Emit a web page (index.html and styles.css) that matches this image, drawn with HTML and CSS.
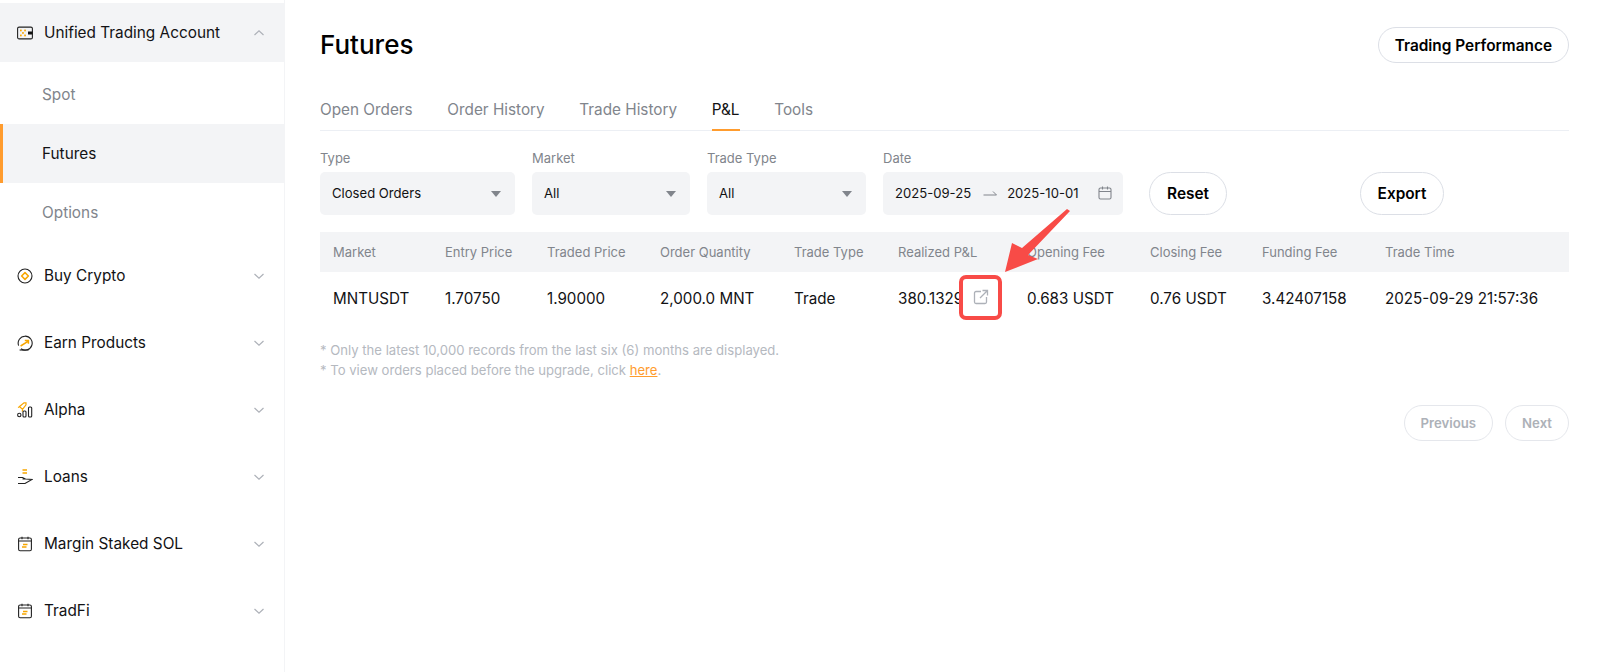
FILE: index.html
```html
<!DOCTYPE html>
<html lang="en">
<head>
<meta charset="utf-8">
<title>Futures</title>
<link rel="stylesheet" href="styles.css">
</head>
<body>
<div class="page">
  <aside class="sidebar">
    <div class="nav-head open">
      <svg class="nav-icon" viewBox="0 0 16 16"><rect x="0.6" y="2.1" width="14.8" height="11.8" rx="1.5" class="ik"/><rect x="11" y="6.5" width="4.5" height="3" fill="#111"/><g fill="#f7a600"><rect x="3" y="4.6" width="1.7" height="1.7"/><rect x="7.2" y="4.6" width="1.7" height="1.7"/><rect x="5.1" y="7.1" width="1.7" height="1.7"/><rect x="3" y="9.6" width="1.7" height="1.7"/><rect x="7.2" y="9.6" width="1.7" height="1.7"/></g></svg>
      <span class="nav-label">Unified Trading Account</span>
      <svg class="chev" viewBox="0 0 12 12"><path d="M1.5 8 6 3.8 10.5 8"/></svg>
    </div>
    <div class="nav-sub">Spot</div>
    <div class="nav-sub active">Futures</div>
    <div class="nav-sub">Options</div>
    <div class="nav-head group">
      <svg class="nav-icon" viewBox="0 0 16 16"><circle cx="8" cy="8" r="7" class="ik"/><path d="M8 4.6 11.4 8 8 11.4 4.6 8Z" fill="none" stroke="#f7a600" stroke-width="1.5" stroke-linejoin="round"/></svg>
      <span class="nav-label">Buy Crypto</span>
      <svg class="chev" viewBox="0 0 12 12"><path d="M1.5 4 6 8.2 10.5 4"/></svg>
    </div>
    <div class="nav-head">
      <svg class="nav-icon" viewBox="0 0 16 16"><path d="M1.6 10.6A7 7 0 1 1 4 13.8" class="ik"/><path d="M2.6 15h9" class="ik"/><path d="M3.6 11 11 6.4M7.8 5.6h3.6v3.2" fill="none" stroke="#f7a600" stroke-width="1.5"/></svg>
      <span class="nav-label">Earn Products</span>
      <svg class="chev" viewBox="0 0 12 12"><path d="M1.5 4 6 8.2 10.5 4"/></svg>
    </div>
    <div class="nav-head">
      <svg class="nav-icon" viewBox="0 0 16 16"><path d="M2.5 4.5 7 .9h2v2L5.5 7.4ZM1 5.5l2-1M5.8 8l-.8 1.6" fill="none" stroke="#f7a600" stroke-width="1.2"/><circle cx="2.3" cy="13" r="1.7" class="ik"/><rect x="6" y="9" width="3" height="6" rx="1" class="ik"/><rect x="11.5" y="5" width="3.2" height="10" rx="1" class="ik"/></svg>
      <span class="nav-label">Alpha</span>
      <svg class="chev" viewBox="0 0 12 12"><path d="M1.5 4 6 8.2 10.5 4"/></svg>
    </div>
    <div class="nav-head">
      <svg class="nav-icon" viewBox="0 0 16 16"><path d="M5.5 1h4.5M5.5 4h4.5" fill="none" stroke="#f7a600" stroke-width="1.3"/><path d="M1 8.5h4.5l3 1.5h-3M8.5 10 15 10.5 8 14.5H1" class="ik"/></svg>
      <span class="nav-label">Loans</span>
      <svg class="chev" viewBox="0 0 12 12"><path d="M1.5 4 6 8.2 10.5 4"/></svg>
    </div>
    <div class="nav-head">
      <svg class="nav-icon" viewBox="0 0 16 16"><rect x="1.6" y="2" width="12.8" height="12.8" rx="1.5" class="ik"/><path d="M1.6 5h12.8M5 .8v2.4M11 .8v2.4" class="ik"/><path d="M6 8.5h4.5M5 11h4.5" fill="none" stroke="#f7a600" stroke-width="1.3"/></svg>
      <span class="nav-label">Margin Staked SOL</span>
      <svg class="chev" viewBox="0 0 12 12"><path d="M1.5 4 6 8.2 10.5 4"/></svg>
    </div>
    <div class="nav-head">
      <svg class="nav-icon" viewBox="0 0 16 16"><rect x="1.6" y="2" width="12.8" height="12.8" rx="1.5" class="ik"/><path d="M1.6 5h12.8M5 .8v2.4M11 .8v2.4" class="ik"/><path d="M6 8.5h4.5M5 11h4.5" fill="none" stroke="#f7a600" stroke-width="1.3"/></svg>
      <span class="nav-label">TradFi</span>
      <svg class="chev" viewBox="0 0 12 12"><path d="M1.5 4 6 8.2 10.5 4"/></svg>
    </div>
  </aside>

  <main class="main">
    <header class="title-row">
      <h1 class="title">Futures</h1>
      <button class="btn">Trading Performance</button>
    </header>

    <nav class="tabs">
      <span class="tab">Open Orders</span>
      <span class="tab">Order History</span>
      <span class="tab">Trade History</span>
      <span class="tab current">P&amp;L</span>
      <span class="tab">Tools</span>
    </nav>

    <section class="filters">
      <div class="field f-type">
        <label class="field-label">Type</label>
        <div class="select"><span>Closed Orders</span><i class="caret"></i></div>
      </div>
      <div class="field f-market">
        <label class="field-label">Market</label>
        <div class="select"><span>All</span><i class="caret"></i></div>
      </div>
      <div class="field f-trade">
        <label class="field-label">Trade Type</label>
        <div class="select"><span>All</span><i class="caret"></i></div>
      </div>
      <div class="field f-date">
        <label class="field-label">Date</label>
        <div class="select date">
          <span>2025-09-25</span>
          <svg class="range" viewBox="0 0 14 6"><path d="M0.5 5h13L10 1.5"/></svg>
          <span>2025-10-01</span>
          <svg class="cal" viewBox="0 0 14 14"><rect x="1" y="2" width="12" height="11" rx="1.5"/><path d="M1 5.5h12M4.5 .5v3M9.5 .5v3"/></svg>
        </div>
      </div>
      <button class="btn tall reset">Reset</button>
      <button class="btn tall export">Export</button>
    </section>

    <section class="table">
      <div class="row thead">
        <span>Market</span><span>Entry Price</span><span>Traded Price</span><span>Order Quantity</span><span>Trade Type</span><span>Realized P&amp;L</span><span>Opening Fee</span><span>Closing Fee</span><span>Funding Fee</span><span>Trade Time</span>
      </div>
      <div class="row tbody">
        <span>MNTUSDT</span><span>1.70750</span><span>1.90000</span><span>2,000.0 MNT</span><span>Trade</span>
        <span class="pnl">380.1329
          <span class="share"><svg viewBox="0 0 16 16"><path d="M8 2.5H3a1.5 1.5 0 0 0-1.5 1.5v9A1.5 1.5 0 0 0 3 14.5h9a1.5 1.5 0 0 0 1.5-1.5V8M7 9 14.5 1.5M9.5 1.5h5v5"/></svg></span>
        </span>
        <span>0.683 USDT</span><span>0.76 USDT</span><span>3.42407158</span><span>2025-09-29 21:57:36</span>
      </div>
    </section>

    <section class="notes">
      <p>* Only the latest 10,000 records from the last six (6) months are displayed.</p>
      <p>* To view orders placed before the upgrade, click <a class="link">here</a>.</p>
    </section>

    <div class="pager">
      <button class="btn ghost">Previous</button>
      <button class="btn ghost">Next</button>
    </div>
  </main>
</div>
<svg class="arrow" viewBox="0 0 1600 672"><path d="M1070 211 1028 255 1038 259 1005 272 1012 243 1022 248 1067 209Z"/></svg>
</body>
</html>
```
FILE: styles.css
```css
* { box-sizing: border-box; }
html, body { margin: 0; height: 100%; }
body { font-family: Inter, "Liberation Sans", sans-serif; color: #121214; background: #fff; overflow: hidden; position: relative; }
.page { display: flex; height: 672px; }

.sidebar { width: 285px; flex: none; border-right: 1px solid #f3f4f6; padding-top: 3px; }
.nav-head { display: flex; align-items: center; height: 59px; margin-bottom: 8px; padding: 0 19px 0 17px; font-size: 15.35px; font-weight: 400; }
.nav-head.open { background: #f3f4f6; margin-bottom: 3px; }
.nav-head.group { margin-top: 4px; }
.nav-icon { width: 16px; height: 16px; flex: none; margin-right: 11px; }
.ik { fill: none; stroke: #222; stroke-width: 1.1; }
.nav-label { flex: 1; }
.chev { width: 12px; height: 12px; flex: none; fill: none; stroke: #adb1b8; stroke-width: 1.2; }
.nav-sub { height: 59px; display: flex; align-items: center; padding-left: 42px; font-size: 15.35px; font-weight: 400; color: #81858c; }
.nav-sub.active { background: #f3f4f6; color: #121214; border-left: 3px solid #ff9c2e; padding-left: 39px; }

.main { flex: 1; padding: 0 31px 0 35px; min-width: 0; }
.title-row { display: flex; justify-content: space-between; align-items: center; height: 36px; margin-top: 27px; }
.title { margin: 0; font-size: 26px; font-weight: 500; line-height: 36px; color: #000; }
.btn { font-family: inherit; background: #fff; border: 1px solid #dcdfe6; border-radius: 18px; height: 36px; padding: 0 16px; font-size: 15.4px; font-weight: 600; color: #000; }
.tabs { display: flex; gap: 34.7px; border-bottom: 1px solid #eceff4; height: 46px; margin-top: 22px; }
.tab { font-size: 15.3px; font-weight: 400; color: #81858c; line-height: 50px; height: 46px; }
.tab.current { color: #121214; border-bottom: 2px solid #ff9c2e; }

.filters { display: flex; align-items: flex-end; margin-top: 19px; }
.field { margin-right: 17px; }
.f-type { width: 195px; }
.f-market { width: 158px; }
.f-trade { width: 159px; }
.f-date { width: 240px; margin-right: 26px; }
.field-label { display: block; font-size: 13px; line-height: 16px; color: #81858c; margin-bottom: 6px; }
.select { display: flex; align-items: center; justify-content: space-between; height: 43px; background: #f3f4f6; border-radius: 5px; padding: 0 14px 2px 12px; font-size: 13.1px; font-weight: 400; color: #121214; }
.caret { width: 0; height: 0; border-left: 5px solid transparent; border-right: 5px solid transparent; border-top: 6px solid #81858c; margin-top: 2px; }
.date { justify-content: flex-start; padding: 0 11px 1px 12px; }
.range { width: 14px; height: 6px; margin: 0 10px 0 12px; fill: none; stroke: #81858c; stroke-width: 1; }
.cal { width: 14px; height: 14px; fill: none; stroke: #81858c; stroke-width: 1.1; margin-left: auto; }
.tall { height: 43px; border-radius: 22px; padding: 0 16px; }
.reset { width: 78px; }
.export { width: 84px; margin-left: 133px; }

.table { margin-top: 17px; }
.row { display: grid; grid-template-columns: 112px 102px 113px 134px 104px 129px 123px 112px 123px 1fr; padding-left: 13px; align-items: center; }
.thead { height: 40px; background: #f3f4f6; font-size: 13px; color: #81858c; }
.tbody { height: 52px; font-size: 15.2px; font-weight: 400; color: #121214; }
.tbody > span { white-space: nowrap; }
.pnl { position: relative; display: block; }
.share { position: absolute; left: 61px; top: -14px; width: 43px; height: 45px; background: #fff; display: flex; align-items: center; justify-content: center; border: 4px solid #f84b47; border-radius: 7px; }
.share svg { width: 16px; height: 16px; fill: none; stroke: #adb1b8; stroke-width: 1.3; }

.notes { margin-top: 16px; font-size: 13.12px; line-height: 20px; color: #b5b9bf; }
.notes p { margin: 0; }
.link { color: #ff9c2e; text-decoration: underline; }

.pager { display: flex; justify-content: flex-end; gap: 12px; margin-top: 25px; }
.ghost { color: #adb1b8; font-size: 13.2px; border-color: #e5e7ec; padding: 0 16px; }

.arrow { position: absolute; left: 0; top: 0; width: 1600px; height: 672px; pointer-events: none; fill: #f84b47; }
```
